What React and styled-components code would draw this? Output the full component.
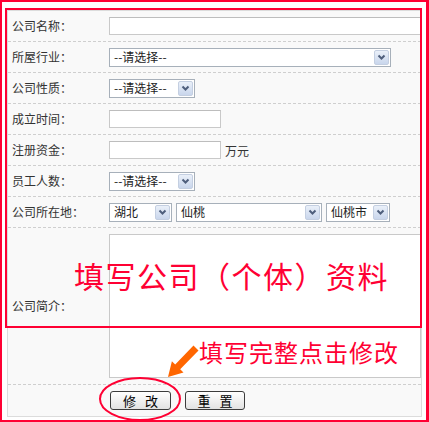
import React from 'react';
import styled, { createGlobalStyle } from 'styled-components';

const GlobalStyle = createGlobalStyle`
  html, body {
    margin: 0;
    padding: 0;
    background: #fff;
  }
  body {
    font-family: 'Noto Sans CJK SC', 'Noto Sans', sans-serif;
  }
`;

const Frame = styled.div`
  position: relative;
  box-sizing: border-box;
  width: 429px;
  height: 422px;
  border: 2px solid #ff0033;
  border-right-width: 3px;
  background: #fff;
  overflow: hidden;
`;

const Form = styled.div`
  box-sizing: border-box;
  width: 415px;
  margin: 8px 0 0 5px;
  border: 1px solid #dcdcdc;
  background: #f9f9f9;
`;

const Row = styled.div`
  display: grid;
  grid-template-columns: 101px 1fr;
  align-items: center;
  height: ${p => p.$h || 31}px;
  box-sizing: border-box;
  border-bottom: ${p => (p.$last ? 'none' : '1px dashed #cfcfcf')};
`;

const Label = styled.div`
  padding-left: 4px;
  font-size: 12px;
  line-height: 14px;
  color: #333;
`;

const Field = styled.div`
  display: flex;
  align-items: center;
  gap: ${p => p.$gap || 4}px;
  font-size: 12px;
  color: #333;
`;

const Input = styled.div`
  box-sizing: border-box;
  width: ${p => p.$w}px;
  height: 18px;
  background: #fff;
  border: 1px solid #c9c9c9;
  border-top-color: #bdbdbd;
`;

const TextArea = styled.div`
  box-sizing: border-box;
  width: 312px;
  height: 144px;
  background: #fff;
  border: 1px solid #c9c9c9;
`;

const Select = styled.div`
  box-sizing: border-box;
  display: flex;
  align-items: center;
  justify-content: space-between;
  width: ${p => p.$w}px;
  height: 19px;
  padding: 0 1px 0 4px;
  background: #fff;
  border: 1px solid #a7b0ba;
  font-size: 12px;
  line-height: 14px;
  color: #222;
  white-space: nowrap;
`;

const DropBtn = styled.span`
  box-sizing: border-box;
  display: flex;
  align-items: center;
  justify-content: center;
  width: 15px;
  height: 15px;
  border: 1px solid #c4cfe1;
  border-radius: 2px;
  background: linear-gradient(#eaf0f9, #c9d6ec);
`;

const Unit = styled.span`
  font-size: 12px;
  color: #333;
`;

const Buttons = styled.div`
  display: flex;
  gap: 14px;
  padding-left: 1px;
`;

const Button = styled.button`
  box-sizing: border-box;
  width: ${p => p.$w}px;
  height: 19px;
  padding: 0 0 0 3px;
  border: 1px solid #3c3c3c;
  border-radius: 3px;
  background: linear-gradient(#ffffff, #e2e2e2);
  font-family: 'Noto Sans CJK SC', sans-serif;
  font-size: 13px;
  line-height: 15px;
  letter-spacing: 3px;
  color: #000;
`;

const Highlight = styled.div`
  position: absolute;
  left: 3px;
  top: 6px;
  width: 417px;
  height: 320px;
  box-sizing: border-box;
  border: 2px solid #ff0033;
  pointer-events: none;
`;

const BigNote = styled.div`
  position: absolute;
  left: 72px;
  top: 258px;
  font-size: 30px;
  line-height: 30px;
  letter-spacing: 1.5px;
  color: #ff0033;
  white-space: nowrap;
`;

const SmallNote = styled.div`
  position: absolute;
  left: 197px;
  top: 338px;
  font-size: 24px;
  line-height: 24px;
  letter-spacing: 1px;
  color: #ff0033;
  white-space: nowrap;
`;

const Overlay = styled.svg`
  position: absolute;
  left: -2px;
  top: -2px;
  pointer-events: none;
`;

const Chevron = () => (
  <svg width="9" height="7" viewBox="0 0 9 7">
    <polyline points="1.5,1.5 4.5,4.5 7.5,1.5" fill="none" stroke="#4f5f7c" strokeWidth="2" />
  </svg>
);

const Drop = ({ w, children }) => (
  <Select $w={w}>
    <span>{children}</span>
    <DropBtn>
      <Chevron />
    </DropBtn>
  </Select>
);

const App = () => (
  <>
    <GlobalStyle />
    <Frame>
      <Form>
        <Row>
          <Label>公司名称：</Label>
          <Field><Input $w={312} /></Field>
        </Row>
        <Row>
          <Label>所屋行业：</Label>
          <Field><Drop w={282}>--请选择--</Drop></Field>
        </Row>
        <Row>
          <Label>公司性质：</Label>
          <Field><Drop w={86}>--请选择--</Drop></Field>
        </Row>
        <Row>
          <Label>成立时间：</Label>
          <Field><Input $w={112} /></Field>
        </Row>
        <Row>
          <Label>注册资金：</Label>
          <Field><Input $w={112} /><Unit>万元</Unit></Field>
        </Row>
        <Row>
          <Label>员工人数：</Label>
          <Field><Drop w={86}>--请选择--</Drop></Field>
        </Row>
        <Row>
          <Label>公司所在地：</Label>
          <Field>
            <Drop w={63}>湖北</Drop>
            <Drop w={146}>仙桃</Drop>
            <Drop w={64}>仙桃市</Drop>
          </Field>
        </Row>
        <Row $h={157}>
          <Label>公司简介：</Label>
          <Field><TextArea /></Field>
        </Row>
        <Row $h={31} $last>
          <span />
          <Buttons>
            <Button $w={61}>修 改</Button>
            <Button $w={60}>重 置</Button>
          </Buttons>
        </Row>
      </Form>

      <Highlight />
      <BigNote>填写公司（个体）资料</BigNote>
      <SmallNote>填写完整点击修改</SmallNote>

      <Overlay width="429" height="422" viewBox="0 0 429 422">
        <ellipse cx="140" cy="399" rx="40" ry="21" fill="none" stroke="#ff0033" strokeWidth="2" />
        <polygon
          points="198.5,350.4 193.5,345.6 175.2,364.5 171.9,361.3 168,377 183.5,372.5 180.2,369.3"
          fill="#ff6600"
        />
      </Overlay>
    </Frame>
  </>
);

export default App;
